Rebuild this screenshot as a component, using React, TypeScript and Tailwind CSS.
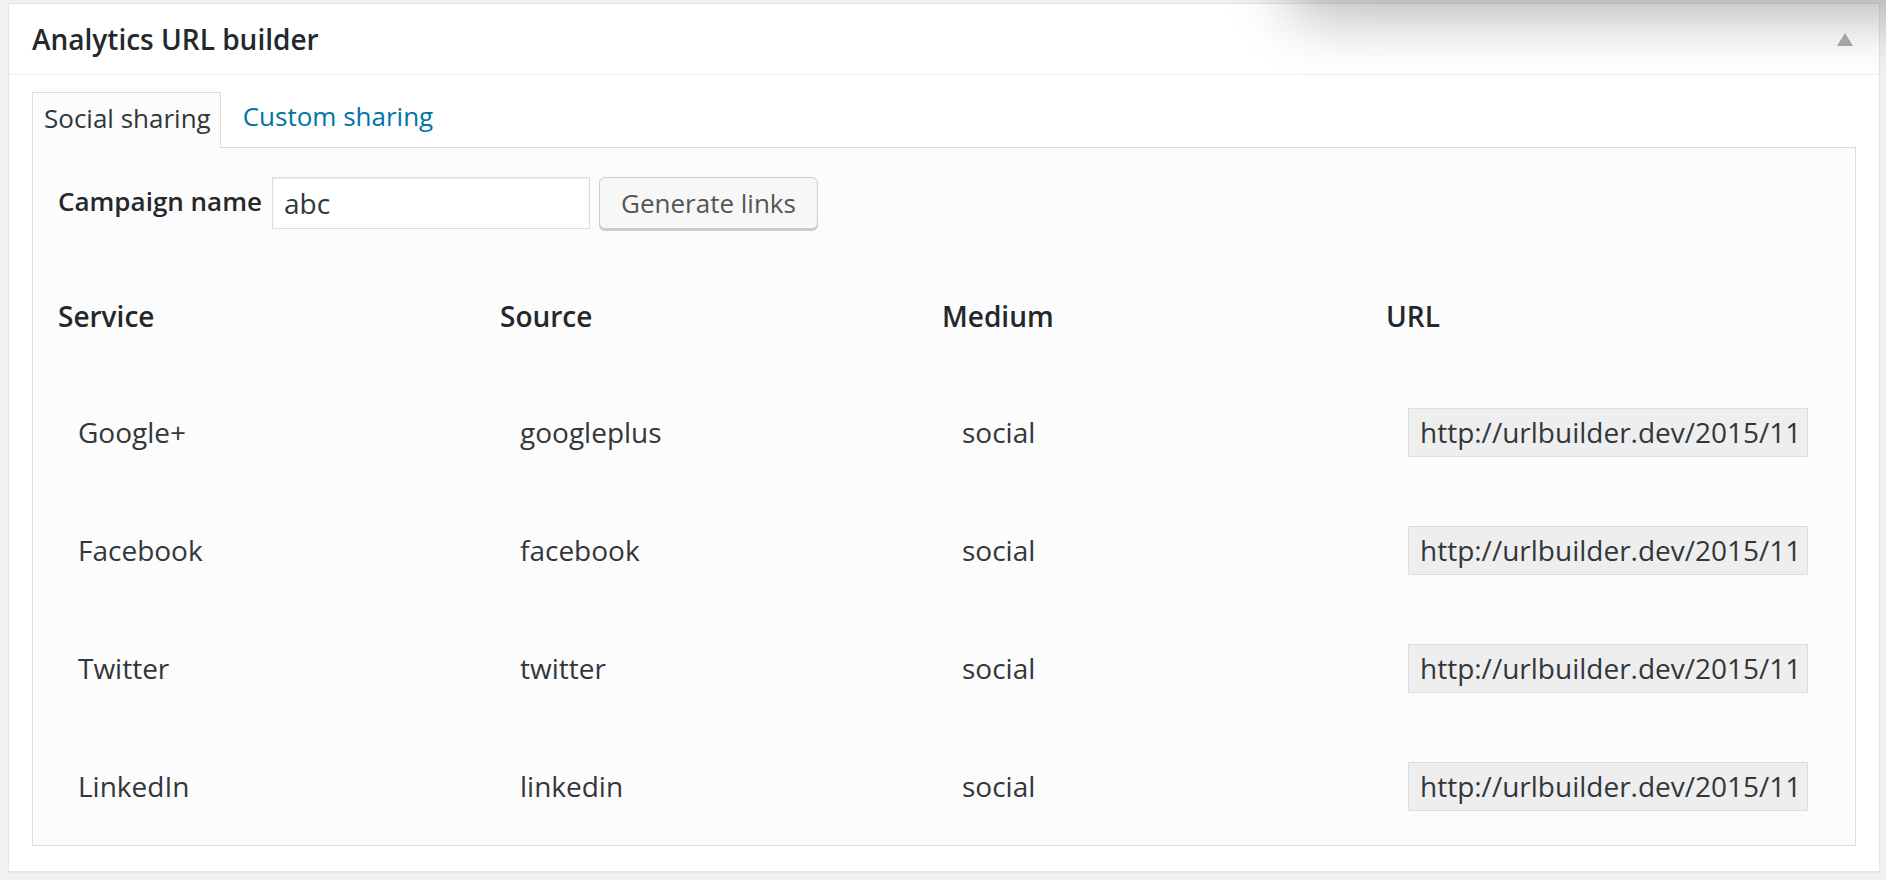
import React from 'react';

const services = [
  { name: 'Google+', source: 'googleplus' },
  { name: 'Facebook', source: 'facebook' },
  { name: 'Twitter', source: 'twitter' },
  { name: 'LinkedIn', source: 'linkedin' },
];

const buildUrl = (source: string) =>
  `http://urlbuilder.dev/2015/11/hello-world/?utm_source=${source}&utm_medium=social&utm_campaign=abc`;

export default function App() {
  return (
    <div className="relative min-h-screen overflow-hidden bg-[#f1f1f1] pt-[3px] pl-[8px] pr-[6px] pb-[8px] font-['Open_Sans',sans-serif] text-[#444]">
      {/* shadow cast by something above the box, top right */}
      <div className="pointer-events-none absolute left-[1300px] top-[-46px] z-10 h-[46px] w-[680px] rounded-full shadow-[0_0_60px_18px_rgba(0,0,0,0.28)]" />

      <div className="border border-[#e5e5e5] bg-white shadow-[0_1px_1px_rgba(0,0,0,0.04)]">
        <div className="flex h-[71px] items-center justify-between border-b border-[#eee] pl-[23px] pr-[26px]">
          <h2 className="text-[28px] font-semibold leading-[39px] text-[#23282d]">Analytics URL builder</h2>
          <svg width="16" height="13" viewBox="0 0 16 13" className="relative z-20">
            <polygon points="8,0 16,13 0,13" fill="#a0a5aa" />
          </svg>
        </div>

        <div className="px-[23px] pt-[15px] pb-[25px]">
          <div className="flex items-end">
            <div className="-mb-px border border-b-0 border-[#dcdcdc] bg-[#fcfcfc] pl-[11px] pr-[9px] pt-[7px] pb-[12px] text-[26px] leading-[36px] text-[#32373c]">
              Social sharing
            </div>
            <a href="#" className="ml-[10px] border border-transparent px-[11px] pt-[7px] pb-[12px] text-[26px] leading-[36px] text-[#0073aa]">
              Custom sharing
            </a>
          </div>

          <div className="border border-[#dcdcdc] bg-[#fcfcfc] px-[25px] pt-[29px]">
            <div className="flex h-[54px] items-start">
              <label className="mt-[6px] text-[26px] font-semibold leading-[36px] text-[#23282d]">Campaign name</label>
              <input
                defaultValue="abc"
                className="ml-[10px] h-[52px] w-[318px] border border-[#ddd] bg-white px-[11px] text-[28px] text-[#32373c] shadow-[inset_0_1px_2px_rgba(0,0,0,0.07)] outline-none"
              />
              <button className="ml-[9px] h-[52px] w-[219px] rounded-[6px] border border-[#ccc] bg-[#f7f7f7] text-[26px] text-[#555] shadow-[0_2px_0_#ccc]">
                Generate links
              </button>
            </div>

            <div className="mt-[28px] grid h-[114px] grid-cols-[442px_442px_442px_1fr] items-center text-[28px] font-semibold text-[#23282d]">
              <div>Service</div>
              <div>Source</div>
              <div>Medium</div>
              <div className="pl-[2px]">URL</div>
            </div>

            {services.map((s) => (
              <div key={s.source} className="grid h-[118px] grid-cols-[442px_442px_442px_1fr] items-center text-[28px] text-[#32373c]">
                <div className="pl-[20px]">{s.name}</div>
                <div className="pl-[20px]">{s.source}</div>
                <div className="pl-[20px]">social</div>
                <div className="pl-[24px]">
                  <input
                    readOnly
                    value={buildUrl(s.source)}
                    className="h-[49px] w-[400px] border border-[#ddd] bg-[#eee] px-[11px] text-[28px] text-[#32373c] outline-none"
                  />
                </div>
              </div>
            ))}
          </div>
        </div>
      </div>
    </div>
  );
}
